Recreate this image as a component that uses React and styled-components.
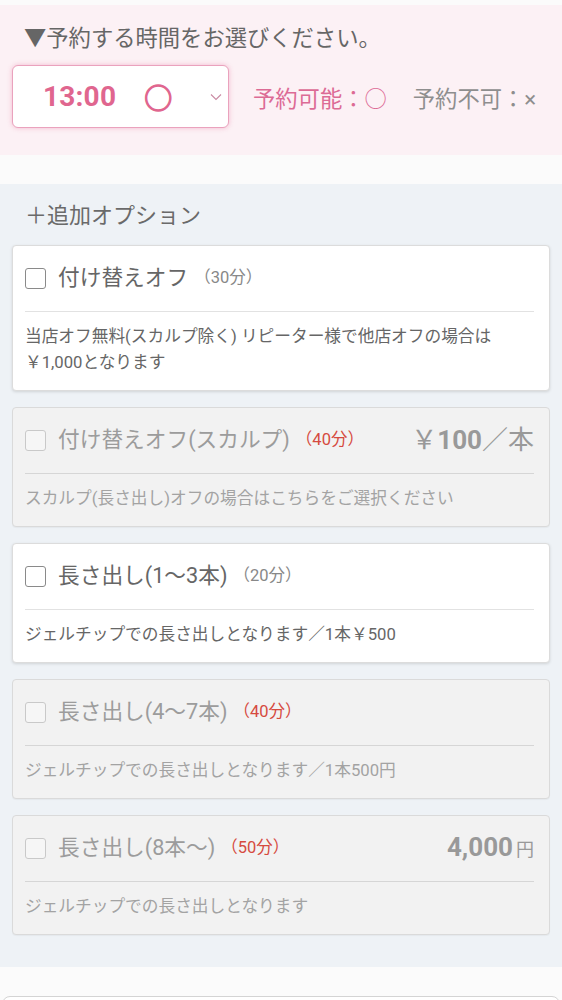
import React from "react";
import styled, { createGlobalStyle } from "styled-components";

const Global = createGlobalStyle`
  html, body { margin: 0; padding: 0; }
  body {
    background: #fbfbfb;
    font-family: Roboto, "Noto Sans CJK JP", "Noto Sans", sans-serif;
    -webkit-font-smoothing: antialiased;
  }
`;

const Page = styled.div`
  padding-top: 5px;
  display: flex;
  flex-direction: column;
`;

const TimeSection = styled.section`
  background: #fcf1f5;
  padding: 17px 12px 27px;
`;

const Heading = styled.h2`
  margin: 0 0 11px;
  padding-left: 12px;
  font-size: 22.3px;
  line-height: 32px;
  font-weight: 400;
  color: #666;
`;

const TimeRow = styled.div`
  display: flex;
  align-items: center;
  gap: 24px;
`;

const TimeSelect = styled.div`
  box-sizing: border-box;
  width: 217px;
  height: 63px;
  display: flex;
  align-items: center;
  padding: 0 6px 0 30px;
  background: #fff;
  border: 1px solid #eaa2bd;
  border-radius: 6px;
  box-shadow: 0 0 5px rgba(232, 120, 160, 0.45);
  color: #e0668f;
`;

const TimeValue = styled.span`
  font-size: 28px;
  font-weight: 700;
  letter-spacing: 0.2px;
`;

const TimeMark = styled.span`
  margin-left: 28px;
  font-size: 28px;
  font-family: "Noto Sans CJK JP", sans-serif;
  line-height: 1;
  -webkit-text-stroke: 1.3px #e0668f;
`;

const Chevron = styled.svg`
  margin-left: auto;
  width: 12px;
  height: 8px;
`;

const Legend = styled.div`
  display: flex;
  align-items: center;
  gap: 26px;
  font-size: 22.3px;
`;

const LegendItem = styled.span`
  color: ${(p) => (p.$ok ? "#dc6b95" : "#8e8e8e")};
  white-space: nowrap;
`;

const OptionSection = styled.section`
  margin-top: 29px;
  background: #eef2f6;
  padding: 16px 12px 32px;
`;

const SectionTitle = styled.h3`
  margin: 0 0 13px;
  padding-left: 13px;
  font-size: 22px;
  line-height: 32px;
  font-weight: 400;
  color: #6a6a6a;
`;

const CardList = styled.div`
  display: flex;
  flex-direction: column;
  gap: 16px;
`;

const Card = styled.div`
  background: ${(p) => (p.$disabled ? "#f2f2f2" : "#fff")};
  border: 1px solid ${(p) => (p.$disabled ? "#dadada" : "#dcdcdc")};
  border-radius: 4px;
  box-shadow: ${(p) =>
    p.$disabled ? "0 1px 1px rgba(0,0,0,0.04)" : "0 1px 3px rgba(0,0,0,0.13)"};
`;

const CardHeader = styled.div`
  display: flex;
  align-items: center;
  padding: 19px 15px 20px 12px;
  height: 26px;
`;

const Check = styled.span`
  box-sizing: border-box;
  flex: none;
  width: 21px;
  height: 21px;
  border: 1.5px solid ${(p) => (p.$disabled ? "#c9c9c9" : "#8a8a8a")};
  border-radius: 3px;
  background: ${(p) => (p.$disabled ? "#f6f6f6" : "#fff")};
  margin-right: 12px;
`;

const Title = styled.span`
  font-size: 21.7px;
  line-height: 26px;
  color: ${(p) => (p.$disabled ? "#9c9c9c" : "#666")};
  white-space: nowrap;
`;

const Duration = styled.span`
  margin-left: 6px;
  font-size: 16.5px;
  line-height: 26px;
  color: ${(p) => (p.$disabled ? "#d64a40" : "#888")};
  white-space: nowrap;
`;

const Price = styled.span`
  margin-left: auto;
  font-size: 26px;
  line-height: 26px;
  color: #999;
  white-space: nowrap;
`;

const PriceNum = styled.span`
  font-weight: 700;
`;

const PriceUnit = styled.span`
  font-size: ${(p) => p.$size || 26}px;
  margin-left: ${(p) => p.$gap || 0}px;
`;

const Divider = styled.hr`
  margin: 0 15px 0 12px;
  border: none;
  border-top: 1px solid ${(p) => (p.$disabled ? "#d6d6d6" : "#e2e2e2")};
`;

const Desc = styled.p`
  margin: 0;
  padding: 12px 15px 14px 12px;
  font-size: 16.7px;
  line-height: 26px;
  color: ${(p) => (p.$disabled ? "#a3a3a3" : "#666")};
`;

const NextCard = styled.div`
  margin: 29px 2px 0;
  height: 40px;
  background: #fff;
  border: 1px solid #d4d4d4;
  border-radius: 8px;
`;

const options = [
  {
    title: "付け替えオフ",
    time: "（30分）",
    desc: ["当店オフ無料(スカルプ除く) リピーター様で他店オフの場合は", "￥1,000となります"],
  },
  {
    title: "付け替えオフ(スカルプ)",
    time: "（40分）",
    disabled: true,
    price: { pre: "￥", num: "100", unit: "／本" },
    desc: ["スカルプ(長さ出し)オフの場合はこちらをご選択ください"],
  },
  {
    title: "長さ出し(1〜3本)",
    time: "（20分）",
    desc: ["ジェルチップでの長さ出しとなります／1本￥500"],
  },
  {
    title: "長さ出し(4〜7本)",
    time: "（40分）",
    disabled: true,
    desc: ["ジェルチップでの長さ出しとなります／1本500円"],
  },
  {
    title: "長さ出し(8本〜)",
    time: "（50分）",
    disabled: true,
    price: { num: "4,000", unit: "円", unitSize: 18, gap: 3 },
    desc: ["ジェルチップでの長さ出しとなります"],
  },
];

function OptionCard({ o }) {
  const d = !!o.disabled;
  return (
    <Card $disabled={d}>
      <CardHeader>
        <Check $disabled={d} />
        <Title $disabled={d}>{o.title}</Title>
        <Duration $disabled={d}>{o.time}</Duration>
        {o.price && (
          <Price>
            {o.price.pre && <PriceUnit>{o.price.pre}</PriceUnit>}
            <PriceNum>{o.price.num}</PriceNum>
            <PriceUnit $size={o.price.unitSize} $gap={o.price.gap}>
              {o.price.unit}
            </PriceUnit>
          </Price>
        )}
      </CardHeader>
      <Divider $disabled={d} />
      <Desc $disabled={d}>
        {o.desc.map((line, i) => (
          <React.Fragment key={i}>
            {i > 0 && <br />}
            {line}
          </React.Fragment>
        ))}
      </Desc>
    </Card>
  );
}

export default function App() {
  return (
    <>
      <Global />
      <Page>
        <TimeSection>
          <Heading>▼予約する時間をお選びください。</Heading>
          <TimeRow>
            <TimeSelect>
              <TimeValue>13:00</TimeValue>
              <TimeMark>○</TimeMark>
              <Chevron viewBox="0 0 12 8">
                <path d="M1 1.5 L6 6.5 L11 1.5" fill="none" stroke="#c98aa3" strokeWidth="1.1" />
              </Chevron>
            </TimeSelect>
            <Legend>
              <LegendItem $ok>予約可能：○</LegendItem>
              <LegendItem>予約不可：×</LegendItem>
            </Legend>
          </TimeRow>
        </TimeSection>
        <OptionSection>
          <SectionTitle>＋追加オプション</SectionTitle>
          <CardList>
            {options.map((o, i) => (
              <OptionCard key={i} o={o} />
            ))}
          </CardList>
        </OptionSection>
        <NextCard />
      </Page>
    </>
  );
}
